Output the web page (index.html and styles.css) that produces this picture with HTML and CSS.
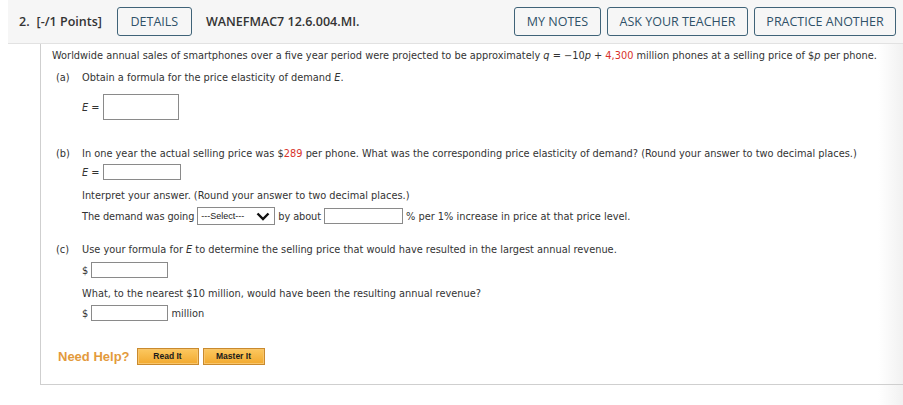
FILE: index.html
```html
<!DOCTYPE html>
<html>
<head>
<meta charset="utf-8">
<link rel="stylesheet" href="styles.css">
</head>
<body>
<div class="header">
  <span class="qnum"><span class="num">2.</span>[-/1 Points]</span>
  <span class="hbtn details">DETAILS</span>
  <span class="qcode">WANEFMAC7 12.6.004.MI.</span>
  <span class="spacer"></span>
  <span class="hbtn notes">MY NOTES</span>
  <span class="hbtn ask">ASK YOUR TEACHER</span>
  <span class="hbtn last">PRACTICE ANOTHER</span>
</div>
<div class="content">
  <div class="intro">Worldwide annual sales of smartphones over a five year period were projected to be approximately <i>q</i> = &minus;10<i>p</i> + <span class="red">4,300</span> million phones at a selling price of $<i>p</i> per phone.</div>

  <div class="part p-a"><span class="lbl">(a)</span><span>Obtain a formula for the price elasticity of demand <i>E</i>.</span></div>
  <div class="ans ans-a"><i>E</i>&nbsp;=&nbsp;<span class="box big"></span></div>

  <div class="part p-b"><span class="lbl">(b)</span><span>In one year the actual selling price was $<span class="red">289</span> per phone. What was the corresponding price elasticity of demand? (Round your answer to two decimal places.)</span></div>
  <div class="ans ans-b"><i>E</i>&nbsp;=&nbsp;<span class="box w77"></span></div>
  <div class="ans line interp">Interpret your answer. (Round your answer to two decimal places.)</div>
  <div class="ans demand"><span class="tight">The demand was going </span><span class="select">---Select---<svg class="chev" width="14" height="9" viewBox="0 0 14 9"><path d="M1.5 1.5 L7 7 L12.5 1.5" fill="none" stroke="#111" stroke-width="2.4"/></svg></span><span class="tight"> by about </span><span class="box w78"></span> % per 1% increase in price at that price level.</div>

  <div class="part p-c"><span class="lbl">(c)</span><span>Use your formula for <i>E</i> to determine the selling price that would have resulted in the largest annual revenue.</span></div>
  <div class="ans ans-c1">$ <span class="box w76"></span></div>
  <div class="ans line what">What, to the nearest $10 million, would have been the resulting annual revenue?</div>
  <div class="ans ans-c2">$ <span class="box w76"></span> million</div>

  <div class="help">
    <span class="needhelp">Need Help?</span>
    <span class="obtn">Read It</span>
    <span class="obtn">Master It</span>
  </div>
</div>
</body>
</html>
```
FILE: styles.css
```css
html, body {
  margin: 0;
  padding: 0;
  overflow: hidden;
}
html {
  background: linear-gradient(to right, #fff 878px, #f1f1f1 903px);
}
body {
  padding-left: 8px;
  width: 903px;
  box-sizing: border-box;
}
.header {
  display: flex;
  align-items: center;
  height: 43px;
  background: #f6f6f6;
  border-bottom: 1px solid #e2e2e2;
  font-family: "Open Sans", "DejaVu Sans", sans-serif;
  font-size: 12.5px;
  color: #333;
  padding-left: 11px;
}
.qnum {
  font-weight: 600;
}
.num { margin-right: 7px; }
.qcode {
  font-weight: 600;
  margin-left: 14px;
}
.spacer { flex: 1; }
.hbtn {
  display: flex;
  align-items: center;
  justify-content: center;
  box-sizing: border-box;
  height: 29px;
  border: 1px solid #3f6378;
  border-radius: 3px;
  color: #2f5168;
  margin-right: 6px;
  white-space: nowrap;
}
.hbtn.details {
  width: 75px;
  margin-left: 15px;
  margin-right: 0;
}
.hbtn.notes { width: 87px; }
.hbtn.ask { width: 141px; }
.hbtn.last { width: 142px; margin-right: 7px; }
.content {
  margin-left: 32px;
  border-left: 1px solid #cfcfcf;
  border-bottom: 1px solid #cfcfcf;
  padding: 4px 0 18px 11px;
  font-family: "DejaVu Sans", Verdana, sans-serif;
  font-size: 9.8px;
  color: #333;
}
.intro, .part, .line {
  line-height: 16px;
  white-space: nowrap;
}
.red { color: #d8322b; }
.part {
  display: flex;
  padding-left: 4px;
}
.lbl { width: 26px; }
.p-a { margin-top: 6px; }
.p-b { margin-top: 26px; }
.p-c { margin-top: 17px; }
.ans {
  padding-left: 30px;
  display: flex;
  align-items: center;
  white-space: pre;
}
.tight { letter-spacing: -0.1px; }
.box {
  display: inline-block;
  box-sizing: border-box;
  height: 16px;
  border: 1px solid #8a8a8a;
  background: #fff;
}
.box.big { width: 76px; height: 26px; }
.w77 { width: 78px; }
.w78 { width: 79px; }
.w76 { width: 77px; }
.ans-a { margin-top: 8px; }
.ans-b { margin-top: 2px; }
.interp { margin-top: 8px; display: block; }
.demand { margin-top: 3px; height: 18px; }
.select {
  display: inline-flex;
  align-items: center;
  justify-content: space-between;
  box-sizing: border-box;
  width: 78px;
  height: 18px;
  border: 1px solid #8a8a8a;
  font-family: "Liberation Sans", Arial, sans-serif;
  font-size: 9px;
  color: #222;
  padding: 0 4px 0 3px;
}
.chev { display: block; }
.ans-c1 { margin-top: 4px; }
.what { margin-top: 8px; display: block; }
.ans-c2 { margin-top: 3px; }
.help {
  display: flex;
  align-items: center;
  margin-top: 25px;
  padding-left: 6px;
  height: 20px;
}
.needhelp {
  font-family: "Liberation Sans", Arial, sans-serif;
  font-weight: bold;
  font-size: 13px;
  color: #e39a3c;
  margin-right: 7px;
}
.obtn {
  display: flex;
  align-items: center;
  justify-content: center;
  box-sizing: border-box;
  width: 62px;
  height: 17px;
  border: 1px solid #c98a2e;
  background: linear-gradient(#fcc860, #f2a92e);
  box-shadow: inset 0 0 0 1px #f8c56b;
  font-family: "Liberation Sans", Arial, sans-serif;
  font-weight: bold;
  font-size: 8.5px;
  color: #1a1a1a;
  margin-right: 4px;
}
```
